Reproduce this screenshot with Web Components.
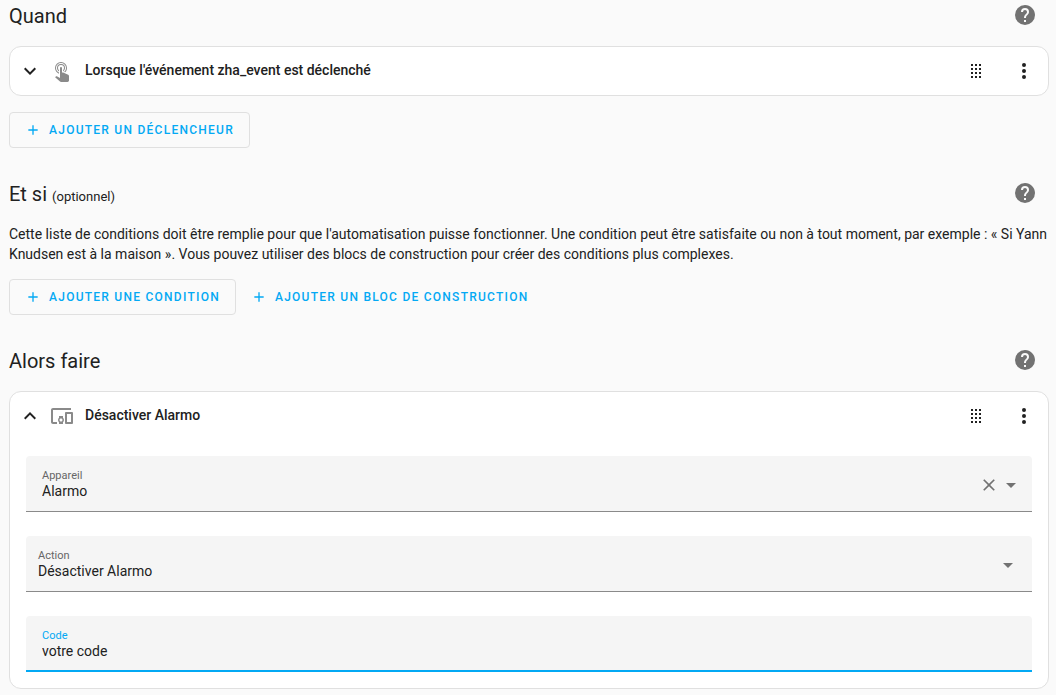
<!DOCTYPE html>
<html lang="fr">
<head>
<meta charset="utf-8">
<meta name="viewport" content="width=device-width, initial-scale=1">
<title>Automatisation</title>
<style>
  body {
    margin: 0;
    background: #fafafa;
    color: #212121;
    font: 14px/20px Roboto, sans-serif;
    --primary: #03a9f4;
    --secondary-text: #727272;
    --divider: #e0e0e0;
    --field: #f5f5f5;
  }
</style>
</head>
<body>
<automation-editor></automation-editor>

<script>
const ICONS = {
  help: 'M15.07,11.25L14.17,12.17C13.45,12.89 13,13.5 13,15H11V14.5C11,13.39 11.45,12.39 12.17,11.67L13.41,10.41C13.78,10.05 14,9.55 14,9C14,7.89 13.1,7 12,7A2,2 0 0,0 10,9H8A4,4 0 0,1 12,5A4,4 0 0,1 16,9C16,9.88 15.64,10.67 15.07,11.25M13,19H11V17H13M12,2A10,10 0 0,0 2,12A10,10 0 0,0 12,22A10,10 0 0,0 22,12C22,6.47 17.5,2 12,2Z',
  tap: 'M10,9A1,1 0 0,1 11,8A1,1 0 0,1 12,9V13.47L13.21,13.6L18.15,15.79C18.68,16.03 19,16.56 19,17.14V21.5C18.97,22.32 18.32,22.97 17.5,23H11C10.62,23 10.26,22.85 10,22.57L5.1,18.37L5.84,17.6C6.03,17.39 6.3,17.28 6.58,17.28H6.8L10,19V9M11,5A4,4 0 0,1 15,9C15,10.5 14.2,11.77 13,12.46V11.24C13.61,10.69 14,9.89 14,9A3,3 0 0,0 11,6A3,3 0 0,0 8,9C8,9.89 8.39,10.69 9,11.24V12.46C7.8,11.77 7,10.5 7,9A4,4 0 0,1 11,5M11,3A6,6 0 0,1 17,9C17,10.7 16.29,12.23 15.16,13.33L14.16,12.88C15.28,11.96 16,10.56 16,9A5,5 0 0,0 11,4A5,5 0 0,0 6,9C6,11.05 7.23,12.81 9,13.58V14.66C6.67,13.83 5,11.61 5,9A6,6 0 0,1 11,3Z',
  devices: 'M3 6H21V4H3C1.9 4 1 4.9 1 6V18C1 19.1 1.9 20 3 20H7V18H3V6M13 12H9V13.78C8.39 14.33 8 15.11 8 16C8 16.89 8.39 17.67 9 18.22V20H13V18.22C13.61 17.67 14 16.88 14 16S13.61 14.33 13 13.78V12M11 17.5C10.17 17.5 9.5 16.83 9.5 16S10.17 14.5 11 14.5 12.5 15.17 12.5 16 11.83 17.5 11 17.5M22 8H16C15.5 8 15 8.5 15 9V19C15 19.5 15.5 20 16 20H22C22.5 20 23 19.5 23 19V9C23 8.5 22.5 8 22 8M21 18H17V10H21V18Z',
  drag: 'M7,19V17H9V19H7M11,19V17H13V19H11M15,19V17H17V19H15M7,15V13H9V15H7M11,15V13H13V15H11M15,15V13H17V15H15M7,11V9H9V11H7M11,11V9H13V11H11M15,11V9H17V11H15M7,7V5H9V7H7M11,7V5H13V7H11M15,7V5H17V7H15Z',
  dots: 'M12,16A2,2 0 0,1 14,18A2,2 0 0,1 12,20A2,2 0 0,1 10,18A2,2 0 0,1 12,16M12,10A2,2 0 0,1 14,12A2,2 0 0,1 12,14A2,2 0 0,1 10,12A2,2 0 0,1 12,10M12,4A2,2 0 0,1 14,6A2,2 0 0,1 12,8A2,2 0 0,1 10,6A2,2 0 0,1 12,4Z',
  down: 'M7.41,8.58L12,13.17L16.59,8.58L18,10L12,16L6,10L7.41,8.58Z',
  up: 'M7.41,15.41L12,10.83L16.59,15.41L18,14L12,8L6,14L7.41,15.41Z',
  plus: 'M19,13H13V19H11V13H5V11H11V5H13V11H19V13Z',
  close: 'M19,6.41L17.59,5L12,10.59L6.41,5L5,6.41L10.59,12L5,17.59L6.41,19L12,13.41L17.59,19L19,17.59L13.41,12L19,6.41Z',
  caret: 'M7,10L12,15L17,10H7Z'
};

class BaseElement extends HTMLElement {
  connectedCallback() {
    if (this.shadowRoot) return;
    this.attachShadow({ mode: 'open' }).innerHTML =
      `<style>*{box-sizing:border-box}${this.styles()}</style>${this.markup()}`;
  }
  attr(name) { return this.getAttribute(name) || ''; }
}

customElements.define('svg-icon', class extends BaseElement {
  styles() {
    return `:host{display:block;flex:none;width:var(--icon-size,24px);height:var(--icon-size,24px)}
      svg{display:block;width:100%;height:100%;fill:currentColor}`;
  }
  markup() { return `<svg viewBox="0 0 24 24" aria-hidden="true"><path d="${ICONS[this.attr('name')]}"/></svg>`; }
});

customElements.define('icon-button', class extends BaseElement {
  styles() {
    return `:host{display:block;flex:none}
      button{display:flex;align-items:center;justify-content:center;width:var(--button-width,48px);
        height:var(--button-height,48px);padding:0;border:0;border-radius:24px;background:none;color:inherit;cursor:pointer}`;
  }
  markup() { return `<button type="button" aria-label="${this.attr('label')}"><svg-icon name="${this.attr('icon')}"></svg-icon></button>`; }
});

customElements.define('add-button', class extends BaseElement {
  styles() {
    return `:host{display:block}
      button{display:flex;align-items:center;gap:8px;height:36px;padding:0 15px;
        border:1px solid var(--divider);border-radius:4px;background:none;color:var(--primary);
        font:500 12px/20px Roboto,sans-serif;letter-spacing:1.25px;text-transform:uppercase;white-space:nowrap;cursor:pointer}
      :host([plain]) button{border-color:transparent;padding:0 8px}
      svg-icon{--icon-size:16px}`;
  }
  markup() { return `<button type="button"><svg-icon name="plus"></svg-icon><slot></slot></button>`; }
});

customElements.define('editor-section', class extends BaseElement {
  styles() {
    return `:host{display:block}
      header{display:flex;align-items:flex-start;height:31px;margin-bottom:14px;padding-right:12px}
      h2{flex:1;margin:0;font-size:20px;line-height:31px;font-weight:400}
      small{font-size:13px}
      icon-button{color:var(--secondary-text);--button-width:24px;--button-height:28px}`;
  }
  markup() {
    const note = this.attr('note');
    return `<section><header><h2>${this.attr('heading')}${note ? ` <small>${note}</small>` : ''}</h2>
      <icon-button icon="help" label="Aide"></icon-button></header><slot></slot></section>`;
  }
});

customElements.define('action-row', class extends BaseElement {
  styles() {
    return `:host{display:flex;flex-wrap:wrap;column-gap:6px}`;
  }
  markup() { return `<slot></slot>`; }
});

customElements.define('editor-card', class extends BaseElement {
  styles() {
    return `:host{display:block;border:1px solid var(--divider);border-radius:12px;background:#fff}
      header{display:flex;align-items:center;height:48px;padding-left:8px}
      .toggle{--button-width:24px}
      .kind{margin:0 11px 0 8px;color:#8a8a8a}
      h3{flex:1;margin:0;font-size:14px;line-height:20px;font-weight:500;padding-bottom:2px}
      .body{display:grid;gap:24px;padding:16px}
      :host(:not([open])) .body{display:none}`;
  }
  markup() {
    const open = this.hasAttribute('open');
    return `<header>
        <icon-button class="toggle" icon="${open ? 'up' : 'down'}" label="${open ? 'Réduire' : 'Développer'}"></icon-button>
        <svg-icon class="kind" name="${this.attr('icon')}"></svg-icon>
        <h3>${this.attr('heading')}</h3>
        <icon-button icon="drag" label="Déplacer"></icon-button>
        <icon-button icon="dots" label="Menu"></icon-button>
      </header><div class="body"><slot></slot></div>`;
  }
});

customElements.define('form-field', class extends BaseElement {
  styles() {
    return `:host{display:block}
      .box{display:grid;grid-template-columns:1fr auto;grid-template-rows:12px 18px;align-content:start;
        height:56px;padding:14px 10px 0 16px;border-bottom:1px solid #8a8a8a;border-radius:4px 4px 0 0;background:var(--field)}
      :host([type=select]) .box{padding-left:12px;padding-right:12px}
      :host([active]) .box{border-bottom:2px solid var(--primary)}
      label{font-size:11px;line-height:12px;color:#666}
      :host([active]) label{color:var(--primary)}
      input,select{grid-row:2;grid-column:1;width:100%;height:18px;margin:0;padding:0;border:0;outline:0;appearance:none;
        background:none;color:inherit;font:14px/18px Roboto,sans-serif}
      .icons{grid-row:1/3;grid-column:2;display:flex;align-items:center;color:var(--secondary-text)}
      .icons icon-button{--button-width:22px;--button-height:24px}
      .clear{--icon-size:20px}`;
  }
  markup() {
    const type = this.attr('type'), value = this.attr('value');
    const control = type === 'select'
      ? `<select id="control"><option>${value}</option></select>`
      : `<input id="control" type="text" value="${value}"${type === 'combo' ? ' role="combobox" aria-expanded="false"' : ''}>`;
    const icons = {
      combo: `<div class="icons"><icon-button class="clear" icon="close" label="Effacer"></icon-button><icon-button icon="caret" label="Ouvrir"></icon-button></div>`,
      select: `<div class="icons"><svg-icon name="caret"></svg-icon></div>`
    }[type] || '';
    return `<div class="box"><label for="control">${this.attr('label')}</label>${control}${icons}</div>`;
  }
});

customElements.define('automation-editor', class extends BaseElement {
  styles() {
    return `:host{display:block}
      main{display:grid;gap:31px;padding:1px 7px 6px 9px}
      p{margin:0 0 15px}
      editor-card + action-row{margin-top:16px}`;
  }
  markup() {
    return `<main>
      <editor-section heading="Quand">
        <editor-card icon="tap" heading="Lorsque l'événement zha_event est déclenché"></editor-card>
        <action-row><add-button>Ajouter un déclencheur</add-button></action-row>
      </editor-section>
      <editor-section heading="Et si" note="(optionnel)">
        <p>Cette liste de conditions doit être remplie pour que l'automatisation puisse fonctionner. Une condition peut être satisfaite ou non à tout moment, par exemple : « Si Yann Knudsen est à la maison ». Vous pouvez utiliser des blocs de construction pour créer des conditions plus complexes.</p>
        <action-row>
          <add-button>Ajouter une condition</add-button>
          <add-button plain>Ajouter un bloc de construction</add-button>
        </action-row>
      </editor-section>
      <editor-section heading="Alors faire">
        <editor-card open icon="devices" heading="Désactiver Alarmo">
          <form-field type="combo" label="Appareil" value="Alarmo"></form-field>
          <form-field type="select" label="Action" value="Désactiver Alarmo"></form-field>
          <form-field type="text" active label="Code" value="votre code"></form-field>
        </editor-card>
      </editor-section>
    </main>`;
  }
});
</script>
</body>
</html>
